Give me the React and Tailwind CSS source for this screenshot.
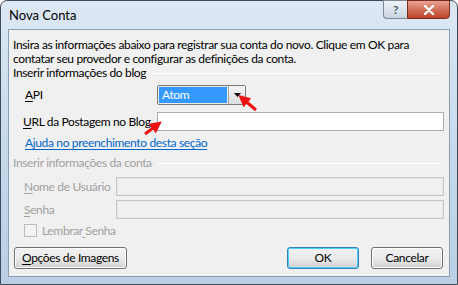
import React from 'react';

const font = { fontFamily: 'Lato, "Noto Sans", sans-serif' };

function Separator({ children, disabled }) {
    return (
        <div className={`flex items-center h-[14px] ${disabled ? 'text-[#a0a0a0]' : 'text-black'}`}>
            <span className="whitespace-nowrap">{children}</span>
            <div className="flex-1 ml-[5px] mr-[9px] h-px bg-[#e0e0e0] border-b border-white" />
        </div>
    );
}

function Label({ accel, rest, w, disabled }) {
    return (
        <span className={`whitespace-nowrap ${w} ${disabled ? 'text-[#a0a0a0]' : 'text-black'}`}>
            <span className="underline underline-offset-2">{accel}</span>{rest}
        </span>
    );
}

function WinButton({ children, primary, className = '' }) {
    return (
        <div className={`h-[22px] whitespace-nowrap flex items-center justify-center rounded-[3px] border ${primary ? 'border-[#3c7fb1] shadow-[inset_0_0_0_1px_#48d1fd]' : 'border-[#707070] shadow-[inset_0_0_0_1px_#fcfcfc]'} bg-gradient-to-b from-[#f2f2f2] via-[#ebebeb] to-[#d0d0d0] ${className}`}>
            {children}
        </div>
    );
}

export default function App() {
    return (
        <div className="w-[458px] h-[285px] bg-white" style={font}>
            <div className="relative w-[458px] h-[285px] rounded-t-[7px] border border-[#3f4b57] bg-gradient-to-b from-[#dce8f4] via-[#c7daec] to-[#b8cfe5] flex flex-col text-[12px] leading-[14px] tracking-[-0.35px]">
                {/* title bar */}
                <div className="h-[28px] flex items-start">
                    <span className="ml-[8px] mt-[7px] text-[13px] text-black tracking-normal">Nova Conta</span>
                    <div className="flex-1" />
                    <div className="flex mr-[7px] -mt-px">
                        <div className="w-[24px] h-[19px] rounded-bl-[4px] border border-[#7c8a98] border-r-0 bg-gradient-to-b from-[#eef3f8] to-[#c8d4e0] flex items-center justify-center text-[#505c68] text-[12px] font-bold">?</div>
                        <div className="w-[43px] h-[19px] rounded-br-[4px] border border-[#7a2a20] bg-gradient-to-b from-[#e9a593] via-[#d16f58] to-[#c0432c] flex items-center justify-center">
                            <svg width="12" height="10" viewBox="0 0 12 10">
                                <path d="M2 1 L10 9 M10 1 L2 9" stroke="#fff" strokeWidth="2.4" strokeLinecap="round" />
                            </svg>
                        </div>
                    </div>
                </div>
                {/* client area */}
                <div className="mx-[7px] mb-[7px] flex-1 border border-[#8c9fb2] bg-[#f0f0f0] pl-[4px] pt-[8px] flex flex-col">
                    <div className="text-black whitespace-nowrap">Insira as informações abaixo para registrar sua conta do novo. Clique em OK para</div>
                    <div className="text-black whitespace-nowrap">contatar seu provedor e configurar as definições da conta.</div>
                    <Separator>Inserir informações do blog</Separator>

                    <div className="flex items-center mt-[5px] h-[20px]">
                        <Label w="w-[144px] pl-[12px]" accel="A" rest="PI" />
                        <div className="w-[89px] h-[20px] border border-[#7a7a7a] rounded-[2px] flex bg-[#ececec]">
                            <div className="flex-1 m-px bg-[#3399ff] text-white flex items-center pl-[3px]">Atom</div>
                            <div className="w-[17px] flex items-center justify-center border-l border-[#a5a5a5] bg-gradient-to-b from-[#f4f4f4] to-[#dcdcdc]">
                                <svg width="7" height="4" viewBox="0 0 7 4"><path d="M0 0 H7 L3.5 4 Z" fill="#000" /></svg>
                            </div>
                        </div>
                    </div>

                    <div className="flex items-center mt-[7px] h-[19px]">
                        <Label w="w-[144px] pl-[10px]" accel="U" rest="RL da Postagem no Blog" />
                        <div className="flex-1 mr-[5px] h-[19px] border border-[#abadb3] bg-white" />
                    </div>

                    <div className="mt-[5px] h-[14px] pl-[12px]">
                        <span className="text-[#0066cc] underline underline-offset-2">Ajuda no preenchimento desta seção</span>
                    </div>

                    <div className="mt-[6px]">
                        <Separator disabled>Inserir informações da conta</Separator>
                    </div>

                    <div className="flex items-center mt-[7px] h-[19px]">
                        <Label disabled w="w-[103px] pl-[11px]" accel="N" rest="ome de Usuário" />
                        <div className="flex-1 mr-[5px] h-[19px] border border-[#c7c7c7] shadow-[inset_0_0_0_1px_#e5e5e5] bg-[#f0f0f0]" />
                    </div>

                    <div className="flex items-center mt-[4px] h-[19px]">
                        <Label disabled w="w-[103px] pl-[11px]" accel="S" rest="enha" />
                        <div className="flex-1 mr-[5px] h-[19px] border border-[#c7c7c7] shadow-[inset_0_0_0_1px_#e5e5e5] bg-[#f0f0f0]" />
                    </div>

                    <div className="flex items-center mt-[5px] h-[13px] pl-[11px]">
                        <div className="w-[13px] h-[13px] border border-[#bcbcbc] bg-[#f4f4f4]" />
                        <span className="ml-[5px] text-[#a0a0a0]">Lembrar<span className="underline underline-offset-2"> </span>Senha</span>
                    </div>

                    <div className="flex items-center mt-[10px] pr-[6px]">
                        <WinButton className="ml-[1px] w-[113px]">
                            <span><span className="underline underline-offset-2">O</span>pções de Imagens</span>
                        </WinButton>
                        <div className="flex-1" />
                        <WinButton primary className="w-[72px]">OK</WinButton>
                        <WinButton className="w-[72px] ml-[12px]">Cancelar</WinButton>
                    </div>
                </div>

                {/* red annotation arrows */}
                <svg className="absolute left-0 top-0 pointer-events-none" width="458" height="285">
                    <defs>
                        <marker id="ah" markerWidth="4" markerHeight="4" refX="2" refY="2" orient="auto">
                            <path d="M0 0 L4 2 L0 4 Z" fill="#ee1111" />
                        </marker>
                    </defs>
                    <path d="M255 109 L242 98" stroke="#ee1111" strokeWidth="3" markerEnd="url(#ah)" />
                    <path d="M144 133 L156 124" stroke="#ee1111" strokeWidth="3" markerEnd="url(#ah)" />
                </svg>
            </div>
        </div>
    );
}
